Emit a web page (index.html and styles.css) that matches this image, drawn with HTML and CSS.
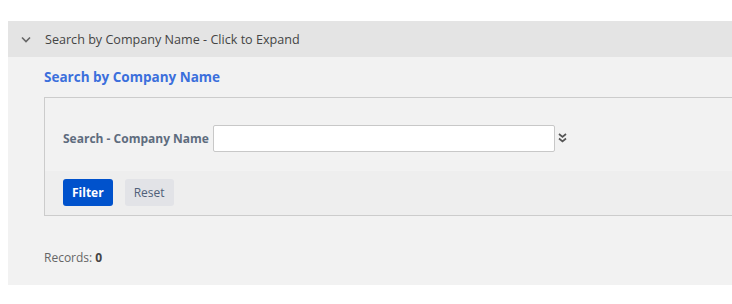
FILE: index.html
```html
<!DOCTYPE html>
<html lang="en">
<head>
    <meta charset="UTF-8">
    <title>Search by Company Name</title>
<link rel="stylesheet" href="styles.css">
</head>
<body>
    <div class="panel">
        <div class="panel-header">
            <svg class="chevron" width="10" height="7" viewBox="0 0 10 7">
                <path d="M1 1.5 L5 5.5 L9 1.5" fill="none" stroke="#666" stroke-width="1.6"/>
            </svg>
            <span>Search by Company Name - Click to Expand</span>
        </div>
        <div class="panel-body">
            <h3 class="section-title">Search by Company Name</h3>
            <div class="search-box">
                <div class="search-row">
                    <label class="field-label" for="company">Search - Company Name</label>
                    <input type="text" id="company" class="field-input">
                    <svg class="more" width="9" height="10" viewBox="0 0 9 10">
                        <path d="M1 1 L4.5 4 L8 1 M1 5.5 L4.5 8.5 L8 5.5" fill="none" stroke="#555" stroke-width="1.7"/>
                    </svg>
                </div>
                <div class="button-row">
                    <button class="btn btn-primary">Filter</button>
                    <button class="btn btn-default">Reset</button>
                </div>
            </div>
            <div class="records">Records: <b>0</b></div>
        </div>
    </div>
</body>
</html>
```

FILE: styles.css
```css
body {
    margin: 0;
    padding: 21px 0 0 8px;
    font-family: "Open Sans", Arial, sans-serif;
    background: #fff;
}

.panel {
    width: 740px;
}

.panel-header {
    display: flex;
    align-items: center;
    height: 36px;
    background-color: #e4e4e4;
    color: #444;
    font-size: 12.6px;
}

.chevron {
    margin: 0 14px 0 13px;
}

.panel-body {
    background-color: #f2f2f2;
    padding: 11px 0 19px 36px;
}

.section-title {
    margin: 0 0 11px 0;
    font-size: 13.5px;
    font-weight: bold;
    color: #3b6fdc;
    line-height: 18px;
}

.search-box {
    border: 1px solid #cccccc;
    border-right: none;
}

.search-row {
    display: flex;
    align-items: center;
    padding: 27px 0 19px 18px;
}

.field-label {
    font-size: 12px;
    font-weight: bold;
    color: #5e6c7e;
    margin-right: 4px;
}

.field-input {
    width: 342px;
    height: 27px;
    box-sizing: border-box;
    border: 1px solid #c8c8c8;
    border-radius: 2px;
    background: #fff;
    margin: 0;
}

.more {
    margin-left: 3px;
    margin-top: -2px;
}

.button-row {
    display: flex;
    gap: 12px;
    padding: 8px 0 9px 18px;
    background-color: #eeeeee;
}

.btn {
    height: 27px;
    padding: 0 9px;
    border: none;
    border-radius: 3px;
    font-family: "Open Sans", Arial, sans-serif;
    font-size: 12px;
}

.btn-primary {
    background-color: #0052cc;
    color: #fff;
    font-weight: bold;
}

.btn-default {
    background-color: #e2e3e7;
    color: #505f79;
}

.records {
    margin-top: 33px;
    font-size: 12px;
    color: #666;
}

.records b {
    color: #444;
}
```
